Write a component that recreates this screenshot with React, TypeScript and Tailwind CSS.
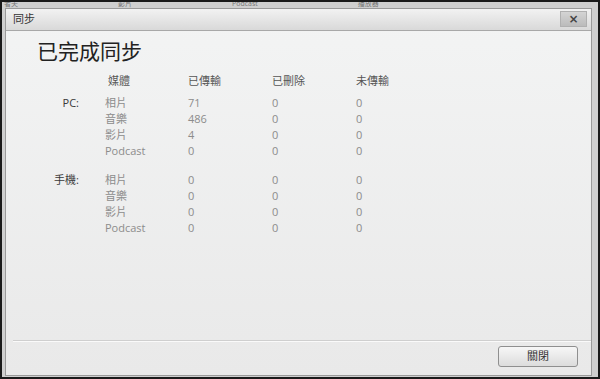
import React from "react";

const font = { fontFamily: '"Open Sans", "Noto Sans CJK TC", sans-serif' };

type Row = [string, string, string, string];

const pc: Row[] = [
  ["相片", "71", "0", "0"],
  ["音樂", "486", "0", "0"],
  ["影片", "4", "0", "0"],
  ["Podcast", "0", "0", "0"],
];
const phone: Row[] = [
  ["相片", "0", "0", "0"],
  ["音樂", "0", "0", "0"],
  ["影片", "0", "0", "0"],
  ["Podcast", "0", "0", "0"],
];

function Group({ label, rows }: { label: string; rows: Row[] }) {
  return (
    <div className="flex">
      <div className="w-[42px] text-right text-[11px] leading-[16px] text-[#3a3a3a]">{label}</div>
      <div className="ml-[26px] flex flex-col">
        {rows.map((r, i) => (
          <div key={i} className="flex h-[16px] items-center text-[11px] text-[#8c8c8c]">
            <div className="w-[83px]">{r[0]}</div>
            <div className="w-[84px]">{r[1]}</div>
            <div className="w-[84px]">{r[2]}</div>
            <div className="w-[60px]">{r[3]}</div>
          </div>
        ))}
      </div>
    </div>
  );
}

export default function App() {
  return (
    <div
      style={font}
      className="w-[600px] h-[379px] bg-[#cfcfcf] border-2 border-[#1a1a1a] flex flex-col overflow-hidden"
    >
      <div className="h-[6px] flex text-[7px] leading-[7px] text-[#777] overflow-hidden gap-[100px] pl-[2px]">
        <span className="-mt-[2px]">者夫</span>
        <span className="-mt-[2px]">影片</span>
        <span className="-mt-[2px]">Podcast</span>
        <span className="-mt-[2px]">播放器</span>
      </div>
      <div className="flex flex-1 pl-[3px] pr-[6px] pb-[1px]">
        <div className="flex-1 flex flex-col border border-[#9a9a9a] bg-gradient-to-b from-[#f3f4f4] to-[#e9e9e9]">
          <div className="h-[22px] flex items-center justify-between pl-[7px] pr-[4px] bg-gradient-to-b from-[#f2f2f2] to-[#d9d9d9] border-b border-[#a8a8a8]">
            <span className="text-[11px] text-[#333]">同步</span>
            <div className="w-[27px] h-[16px] -mt-[2px] flex items-center justify-center bg-gradient-to-b from-[#d4d4d4] to-[#bbbbbb] border border-[#b0b0b0] text-[#444] text-[16px] leading-none font-semibold">
              ×
            </div>
          </div>
          <div className="flex-1 flex flex-col">
            <div className="pl-[31px] pt-[6px] text-[21px] leading-[28px] text-[#222]">已完成同步</div>
            <div className="pl-[31px] mt-[8px] flex flex-col">
              <div className="flex h-[16px] items-center text-[11px] text-[#555]">
                <div className="w-[68px]" />
                <div className="w-[83px] pl-[3px]">媒體</div>
                <div className="w-[84px]">已傳輸</div>
                <div className="w-[84px]">已刪除</div>
                <div className="w-[60px]">未傳輸</div>
              </div>
              <div className="mt-[6px]">
                <Group label="PC:" rows={pc} />
              </div>
              <div className="mt-[13px]">
                <Group label="手機:" rows={phone} />
              </div>
            </div>
            <div className="flex-1" />
            <div className="ml-[7px] border-t border-[#cfcfcf] shadow-[0_1px_0_#fafafa]" />
            <div className="flex justify-end pr-[13px] pt-[5px] pb-[8px]">
              <div className="w-[80px] h-[21px] flex items-center justify-center rounded-[3px] border border-[#8f8f8f] bg-gradient-to-b from-[#f7f7f7] to-[#dcdcdc] text-[11px] text-[#333]">
                關閉
              </div>
            </div>
          </div>
        </div>
      </div>
    </div>
  );
}
